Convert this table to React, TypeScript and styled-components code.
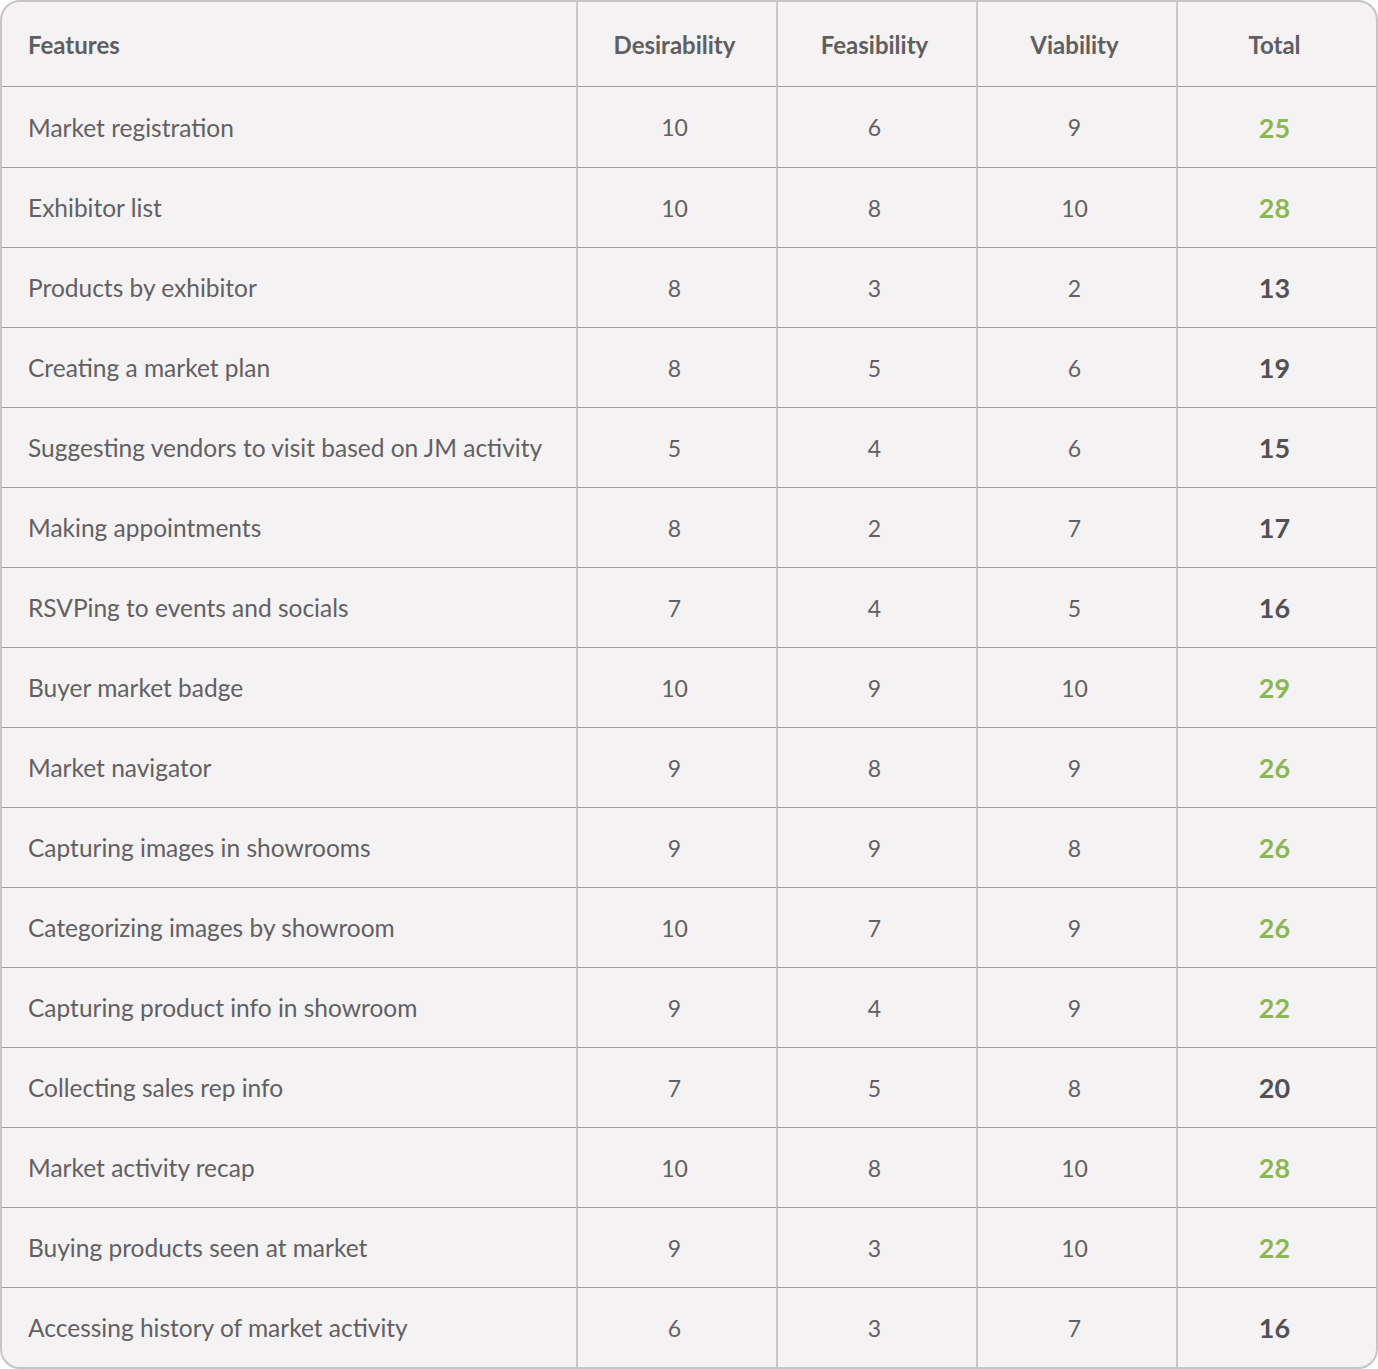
import React from "react";
import styled, { createGlobalStyle } from "styled-components";

type Feature = {
  name: string;
  desirability: number;
  feasibility: number;
  viability: number;
};

const features: Feature[] = [
  { name: "Market registration", desirability: 10, feasibility: 6, viability: 9 },
  { name: "Exhibitor list", desirability: 10, feasibility: 8, viability: 10 },
  { name: "Products by exhibitor", desirability: 8, feasibility: 3, viability: 2 },
  { name: "Creating a market plan", desirability: 8, feasibility: 5, viability: 6 },
  { name: "Suggesting vendors to visit based on JM activity", desirability: 5, feasibility: 4, viability: 6 },
  { name: "Making appointments", desirability: 8, feasibility: 2, viability: 7 },
  { name: "RSVPing to events and socials", desirability: 7, feasibility: 4, viability: 5 },
  { name: "Buyer market badge", desirability: 10, feasibility: 9, viability: 10 },
  { name: "Market navigator", desirability: 9, feasibility: 8, viability: 9 },
  { name: "Capturing images in showrooms", desirability: 9, feasibility: 9, viability: 8 },
  { name: "Categorizing images by showroom", desirability: 10, feasibility: 7, viability: 9 },
  { name: "Capturing product info in showroom", desirability: 9, feasibility: 4, viability: 9 },
  { name: "Collecting sales rep info", desirability: 7, feasibility: 5, viability: 8 },
  { name: "Market activity recap", desirability: 10, feasibility: 8, viability: 10 },
  { name: "Buying products seen at market", desirability: 9, feasibility: 3, viability: 10 },
  { name: "Accessing history of market activity", desirability: 6, feasibility: 3, viability: 7 },
];

const GlobalStyle = createGlobalStyle`
  body {
    margin: 0;
    background: #ffffff;
    font-family: Lato, "Open Sans", sans-serif;
  }
`;

const App = () => {
  return (
    <>
      <GlobalStyle />
      <Table>
        <HeaderCell $first>Features</HeaderCell>
        <HeaderCell>Desirability</HeaderCell>
        <HeaderCell>Feasibility</HeaderCell>
        <HeaderCell>Viability</HeaderCell>
        <HeaderCell>Total</HeaderCell>

        {features.map((f, i) => {
          const total = f.desirability + f.feasibility + f.viability;
          const first = i === 0;
          const last = i === features.length - 1;
          return (
            <React.Fragment key={f.name}>
              <NameCell $top={first} $last={last}>{f.name}</NameCell>
              <ScoreCell $top={first} $last={last}>{f.desirability}</ScoreCell>
              <ScoreCell $top={first} $last={last}>{f.feasibility}</ScoreCell>
              <ScoreCell $top={first} $last={last}>{f.viability}</ScoreCell>
              <TotalCell $top={first} $last={last} $high={total >= 22}>
                {total}
              </TotalCell>
            </React.Fragment>
          );
        })}
      </Table>
    </>
  );
};

export default App;

const Table = styled.div`
  display: grid;
  grid-template-columns: 574px repeat(4, 200px);
  width: 1378px;
  box-sizing: border-box;
  border: 2px solid #c6c4c5;
  border-radius: 20px;
  overflow: hidden;
  background-color: #f4f2f3;
`;

const Cell = styled.div<{ $first?: boolean; $top?: boolean; $last?: boolean }>`
  display: flex;
  align-items: center;
  justify-content: center;
  box-sizing: border-box;
  height: ${(p) => (p.$top ? "81px" : p.$last ? "79px" : "80px")};
  padding-right: 5px;
  border-bottom: ${(p) => (p.$last ? "none" : "1px solid #9f9d9e")};
  border-left: ${(p) => (p.$first ? "none" : "2px solid #c9c7c8")};
  color: #626062;
  font-size: 23px;
`;

const HeaderCell = styled(Cell)`
  height: 85px;
  justify-content: ${(p) => (p.$first ? "flex-start" : "center")};
  padding-left: ${(p) => (p.$first ? "26px" : "0")};
  color: #605e60;
  font-weight: 700;
  font-size: 24px;
`;

const NameCell = styled(Cell).attrs({ $first: true })`
  justify-content: flex-start;
  padding-left: 26px;
  font-size: 24.5px;
`;

const ScoreCell = styled(Cell)``;

const TotalCell = styled(Cell)<{ $high: boolean }>`
  font-size: 27px;
  font-weight: 700;
  color: ${(p) => (p.$high ? "#8cb654" : "#535153")};
`;
